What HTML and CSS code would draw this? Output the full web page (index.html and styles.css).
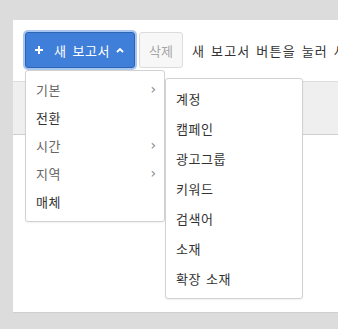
FILE: index.html
```html
<!DOCTYPE html>
<html lang="ko">
<head>
<meta charset="utf-8">
<link rel="stylesheet" href="styles.css">
</head>
<body>
<div class="panel">
  <div class="toolbar">
    <button class="btn-new">
      <svg class="plus" width="8" height="8" viewBox="0 0 8 8"><path d="M3 0h2v3h3v2H5v3H3V5H0V3h3z" fill="#fff"/></svg>
      <span class="btn-label">새 보고서</span>
      <svg class="caret" width="8" height="6" viewBox="0 0 8 6"><path d="M1 5L4 2L7 5" fill="none" stroke="#fff" stroke-width="1.8"/></svg>
    </button>
    <button class="btn-del">삭제</button>
    <span class="hint">새 보고서 버튼을 눌러 사용할 보고서를 선택하세요</span>
  </div>
  <div class="bar"></div>

  <ul class="menu menu-main">
    <li class="item muted">기본<span class="chev">›</span></li>
    <li class="item">전환</li>
    <li class="item muted">시간<span class="chev">›</span></li>
    <li class="item muted">지역<span class="chev">›</span></li>
    <li class="item">매체</li>
  </ul>
  <ul class="menu menu-sub">
    <li class="item">계정</li>
    <li class="item">캠페인</li>
    <li class="item">광고그룹</li>
    <li class="item">키워드</li>
    <li class="item">검색어</li>
    <li class="item">소재</li>
    <li class="item">확장 소재</li>
  </ul>
</div>
</body>
</html>
```
FILE: styles.css
```css
* { box-sizing: border-box; }
html, body { margin: 0; padding: 0; }
body {
  background: #dcdcdc;
  font-family: "Noto Sans CJK KR", "Noto Sans", sans-serif;
  font-size: 13px;
  color: #333;
  overflow: hidden;
}
.panel {
  position: relative;
  margin: 20px 0 0 13px;
  height: 293px;
  background: #fff;
  border-bottom: 1px solid #cfcfcf;
  overflow: hidden;
}
.toolbar {
  display: flex;
  align-items: center;
  padding: 12px 0 13px 12px;
  white-space: nowrap;
}
.btn-new {
  flex: none;
  display: flex;
  align-items: center;
  height: 36px;
  width: 110px;
  padding: 0 10px 0 9px;
  background: #3f7fda;
  border: 1px solid #2d65b5;
  border-radius: 3px;
  box-shadow: 0 0 0 2px #a9c7ee;
  color: #fff;
  font-family: inherit;
  font-size: 13px;
  letter-spacing: 0.5px;
  word-spacing: 2px;
}
.plus { flex: none; }
.btn-label { margin-left: 11px; line-height: 1; }
.caret { margin-left: auto; flex: none; }
.btn-del {
  flex: none;
  margin-left: 4px;
  height: 36px;
  width: 44px;
  padding: 0;
  background: #f7f7f7;
  border: 1px solid #dcdcdc;
  border-radius: 3px;
  color: #a6a6a6;
  font-family: inherit;
  font-size: 13px;
}
.hint {
  flex: none;
  margin-left: 9px;
  letter-spacing: 1.2px;
  word-spacing: 1px;
  color: #333;
}
.bar {
  height: 54px;
  background: #efefef;
  border-top: 1px solid #dedede;
  border-bottom: 1px solid #cdcdcd;
}
.menu {
  position: absolute;
  margin: 0;
  list-style: none;
  background: #fff;
  border: 1px solid #d2d2d2;
  border-radius: 3px;
  box-shadow: 0 1px 2px rgba(0,0,0,0.06);
}
.menu-main {
  left: 12px;
  top: 50px;
  width: 140px;
  height: 152px;
  padding: 4px 0 0;
}
.menu-sub {
  left: 152px;
  top: 58px;
  width: 138px;
  height: 221px;
  padding: 4px 0 0;
}
.item {
  display: flex;
  align-items: center;
  padding: 0 10px;
  line-height: 1;
  letter-spacing: 0.5px;
  word-spacing: 1px;
}
.menu-main .item { height: 28px; }
.menu-sub .item { height: 30px; }
.muted { color: #666; }
.chev {
  margin-left: auto;
  margin-right: -2px;
  color: #888;
  font-family: "DejaVu Sans", sans-serif;
  font-size: 14px;
  letter-spacing: 0;
}
```
